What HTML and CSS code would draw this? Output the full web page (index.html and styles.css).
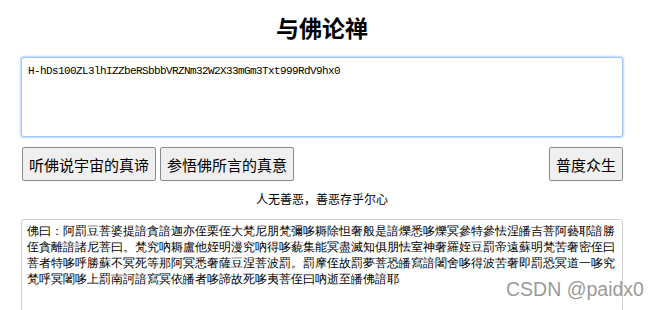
FILE: index.html
```html
<!DOCTYPE html>
<html lang="zh">
<head>
  <meta charset="UTF-8" />
  <title>与佛论禅</title>
  <link rel="stylesheet" href="styles.css">
</head>
<body>
  <div class="wrap">
    <h2>与佛论禅</h2>
    <textarea id="plain" class="plain">H-hDs100ZL3lhIZZbeRSbbbVRZNm32W2X33mGm3Txt999RdV9hx0</textarea>

    <div class="row">
      <div class="left">
        <button>听佛说宇宙的真谛</button>
        <button>参悟佛所言的真意</button>
      </div>
      <button>普度众生</button>
    </div>

    <p class="motto">人无善恶，善恶存乎尔心</p>

    <textarea id="cipher" class="cipher">佛曰：阿罰豆菩婆提諳貪諳迦亦侄栗侄大梵尼朋梵彌哆耨除怛奢般是諳爍悉哆爍冥參特參怯涅皤吉菩阿藝耶諳勝侄貪離諳諸尼菩曰。梵究吶耨盧他姪明漫究吶得哆藐集能冥盡滅知俱朋怯室神奢羅姪豆罰帝遠蘇明梵苦奢密侄曰菩者特哆呼勝蘇不冥死等那阿冥悉奢薩豆涅菩波罰。罰摩侄故罰夢菩恐皤寫諳闍舍哆得波苦奢即罰恐冥道一哆究梵呼冥闍哆上罰南訶諳寫冥依皤者哆諦故死哆夷菩侄曰吶逝至皤佛諳耶</textarea>
  </div>

  <div class="mark">CSDN @paidx0</div>
</body>
</html>
```

FILE: styles.css
```css
body { margin: 0; background: #fff; font-family: "Noto Sans CJK SC", sans-serif; overflow: hidden; }
.wrap { width: 602px; margin-left: 21px; }
h2 { text-align: center; margin: 0; padding-top: 12px; height: 45px; font-size: 23px; line-height: 30px; font-weight: 700; color: #000; }
textarea { display: block; box-sizing: border-box; width: 602px; margin: 0; resize: none; color: #000; background: #fff; }
.plain { height: 80px; padding: 5px 6px; border: 1px solid #9ec5f5; border-radius: 3px; box-shadow: 0 0 2px 1px #b9d8fb; outline: none; font-family: "Liberation Mono", monospace; font-size: 11px; letter-spacing: -0.6px; line-height: 16px; }
.row { display: flex; justify-content: space-between; margin-top: 10px; }
.left { display: flex; gap: 4px; margin-left: 1px; }
button { height: 34px; padding: 0 6px; font-family: "Noto Sans CJK SC", sans-serif; font-size: 15px; color: #000; background: #efefef; border: 1px solid #8a8a8a; border-radius: 2px; }
.motto { margin: 8px 0 0; height: 30px; text-align: center; font-size: 12px; line-height: 20px; color: #000; }
.cipher { height: 120px; padding: 3px 5px; border: 1px solid #d0d0d0; border-radius: 3px; font-size: 12px; line-height: 16px; overflow: hidden; }
.mark { position: absolute; left: 506px; top: 278px; font-family: "Liberation Sans", sans-serif; font-size: 19.5px; color: #9a9a9a; text-shadow: 0 0 2px #fff; }
```
